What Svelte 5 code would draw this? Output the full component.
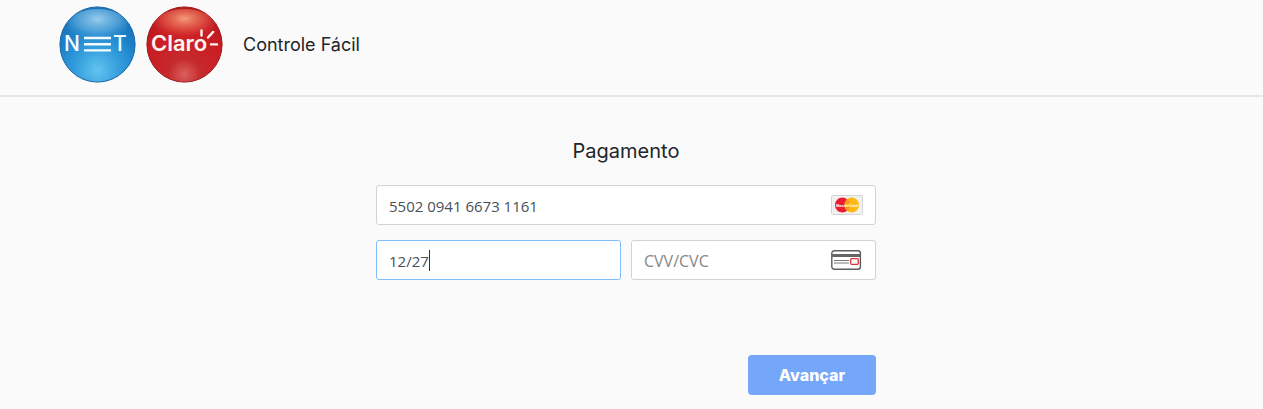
<script>
  let cardNumber = "5502 0941 6673 1161";
  let expiry = "12/27";
  let cvv = "";

  function submit(event) {
    event.preventDefault();
  }
</script>

<header class="topbar">
  <svg class="logo" viewBox="0 0 77 77" role="img" aria-label="NET">
    <defs>
      <radialGradient id="net_ball" cx="50%" cy="84%" r="80%">
        <stop offset="0" stop-color="#62c4ef" />
        <stop offset="0.35" stop-color="#36a0de" />
        <stop offset="0.7" stop-color="#1b80c8" />
        <stop offset="1" stop-color="#1a72b9" />
      </radialGradient>
      <radialGradient id="net_shine" cx="50%" cy="30%" r="60%">
        <stop offset="0" stop-color="#a8d6f2" stop-opacity="0.9" />
        <stop offset="0.6" stop-color="#6cb6e4" stop-opacity="0.6" />
        <stop offset="1" stop-color="#3d98d6" stop-opacity="0.1" />
      </radialGradient>
    </defs>
    <circle cx="38.5" cy="38.5" r="37.6" fill="url(#net_ball)" stroke="#1766a8" stroke-width="1" />
    <ellipse cx="38.5" cy="20" rx="30" ry="17" fill="url(#net_shine)" />
    <text x="5" y="45" class="net_text">N</text>
    <path d="M25 32h27M25 38.2h27M25 44.4h27" stroke="#f4fbff" stroke-width="2.4" />
    <text x="54" y="45" class="net_text">T</text>
  </svg>
  <svg class="logo" viewBox="0 0 77 77" role="img" aria-label="Claro">
    <defs>
      <radialGradient id="claro_ball" cx="50%" cy="90%" r="88%">
        <stop offset="0" stop-color="#d8605c" />
        <stop offset="0.25" stop-color="#c5292c" />
        <stop offset="0.65" stop-color="#ca1c23" />
        <stop offset="1" stop-color="#b4191e" />
      </radialGradient>
      <radialGradient id="claro_shine" cx="50%" cy="30%" r="60%">
        <stop offset="0" stop-color="#f7a47c" stop-opacity="0.95" />
        <stop offset="0.6" stop-color="#e8604e" stop-opacity="0.6" />
        <stop offset="1" stop-color="#d83434" stop-opacity="0.1" />
      </radialGradient>
    </defs>
    <circle cx="38.5" cy="38.5" r="37.6" fill="url(#claro_ball)" stroke="#9c171b" stroke-width="1" />
    <ellipse cx="38.5" cy="19" rx="30" ry="16" fill="url(#claro_shine)" />
    <text x="5" y="45" class="claro_text">Claro</text>
    <path d="M55.5 24.5v5M62 31.5l5.2-5.6M65 38.4h6" stroke="#fff5ef" stroke-width="2.4" stroke-linecap="round" />
  </svg>
  <span class="plan">Controle Fácil</span>
</header>

<main class="content">
  <form class="payment" on:submit={submit}>
    <h1>Pagamento</h1>
    <div class="field">
      <input type="text" aria-label="Número do cartão" bind:value={cardNumber} />
      <svg class="brand" viewBox="0 0 32 20" aria-hidden="true">
        <rect x="0.5" y="0.5" width="31" height="19" rx="1" fill="#f1f1f1" stroke="#d4d4d4" />
        <circle cx="11.3" cy="10" r="7.4" fill="#ed1c2e" />
        <circle cx="20.7" cy="10" r="7.4" fill="#fdb913" />
        <path d="M14 6.3h4M13.5 7.8h5M13.5 12.6h5M14 14.1h4" stroke="#f47b20" stroke-width="0.8" />
        <text x="16" y="11.6" class="brand_text">MasterCard</text>
      </svg>
    </div>
    <div class="row">
      <div class="field active">
        <input type="text" aria-label="Validade" bind:value={expiry} />
        <span class="caret"></span>
      </div>
      <div class="field">
        <input type="text" aria-label="CVV/CVC" placeholder="CVV/CVC" bind:value={cvv} />
        <svg class="brand" viewBox="0 0 32 20" aria-hidden="true">
          <rect x="0.8" y="0.8" width="28.6" height="18.4" rx="2.5" fill="#fff" stroke="#5d5d5d" stroke-width="1.4" />
          <path d="M1 5.5h28.4" stroke="#656565" stroke-width="3" />
          <path d="M3 10.5h15M3 13h15" stroke="#777" />
          <rect x="19.7" y="8.7" width="7.6" height="5.6" rx="1" fill="#fff" stroke="#d8343a" stroke-width="1.3" />
        </svg>
      </div>
    </div>
    <button type="submit">Avançar</button>
  </form>
</main>

<style>
:global(body) {
  background: #fafafa;
  color: #212529;
  font-family: Inter, "Liberation Sans", sans-serif;
}

.topbar {
  display: flex;
  align-items: center;
  gap: 10px;
  padding: 6px 59px 12px;
  border-bottom: 2px solid #e4e6e9;
}

.logo {
  width: 77px;
  height: 77px;
}

.net_text {
  font: 500 21px Inter, sans-serif;
  fill: #f4fbff;
}

.claro_text {
  font: 600 22px Inter, sans-serif;
  fill: #fff5ef;
}

.plan {
  margin-left: 10px;
  font-size: 18px;
  font-weight: 400;
  line-height: 24px;
}

.content {
  padding: 40px 11px 14px 0;
}

.payment {
  display: flex;
  flex-direction: column;
  gap: 15px;
  max-width: 500px;
  margin: 0 auto;
}

h1 {
  margin: 0 0 5px;
  font-size: 20px;
  font-weight: 400;
  line-height: 28px;
  text-align: center;
}

.row {
  display: grid;
  grid-template-columns: repeat(2, minmax(0, 1fr));
  gap: 10px;
}

.field {
  position: relative;
  display: flex;
  align-items: center;
  box-sizing: border-box;
  height: 40px;
  padding: 0 12px;
  border: 1px solid #ced4da;
  border-radius: 3px;
  background: #fff;
}

.field.active {
  border-color: #80bdff;
}

.field input {
  flex: 1;
  min-width: 0;
  padding: 2px 0 0;
  border: 0;
  outline: 0;
  background: none;
  color: #495057;
  font: 15px/24px "Open Sans", "Noto Sans", sans-serif;
}

.field input::placeholder {
  color: #868686;
  font-size: 16px;
  opacity: 1;
}

/* sits right after the typed date */
.caret {
  position: absolute;
  top: 9px;
  left: 52px;
  width: 1px;
  height: 21px;
  background: #333;
}

.brand {
  width: 32px;
  height: 20px;
}

.brand_text {
  font: bold 4px "Liberation Sans", sans-serif;
  fill: #fff;
  text-anchor: middle;
}

button {
  align-self: flex-end;
  width: 128px;
  height: 40px;
  margin-top: 60px;
  padding: 0;
  border: 0;
  border-radius: 4px;
  background: #74a7fa;
  color: #fff;
  font: 800 16px Inter, "Liberation Sans", sans-serif;
}
</style>
